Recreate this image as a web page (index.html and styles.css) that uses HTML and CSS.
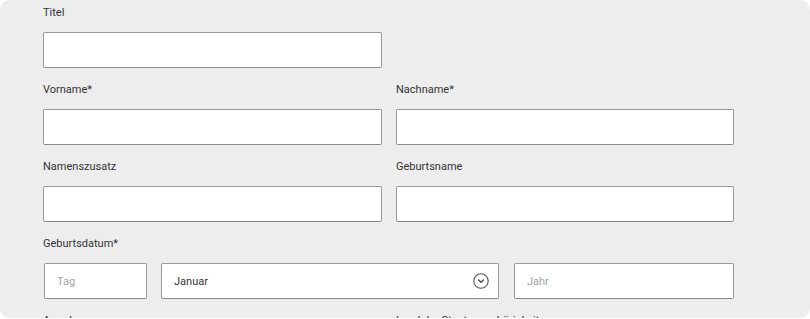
FILE: index.html
```html
<!DOCTYPE html>
<html lang="de">
<head>
    <meta charset="UTF-8">
    <meta name="viewport" content="width=device-width, initial-scale=1.0">
    <title>Persönliche Daten</title>
    <link rel="stylesheet" href="styles.css">
</head>
<body>
    <main class="panel">
        <form class="person-form">
            <div class="form-row">
                <div class="form-group">
                    <label for="titel">Titel</label>
                    <input type="text" id="titel" name="titel">
                </div>
            </div>
            <div class="form-row">
                <div class="form-group">
                    <label for="vorname">Vorname*</label>
                    <input type="text" id="vorname" name="vorname">
                </div>
                <div class="form-group">
                    <label for="nachname">Nachname*</label>
                    <input type="text" id="nachname" name="nachname">
                </div>
            </div>
            <div class="form-row">
                <div class="form-group">
                    <label for="zusatz">Namenszusatz</label>
                    <input type="text" id="zusatz" name="zusatz">
                </div>
                <div class="form-group">
                    <label for="geburtsname">Geburtsname</label>
                    <input type="text" id="geburtsname" name="geburtsname">
                </div>
            </div>
            <div class="form-group">
                <label for="tag">Geburtsdatum*</label>
                <div class="date-row">
                    <input type="text" id="tag" name="tag" placeholder="Tag">
                    <div class="select-wrap">
                        <select id="monat" name="monat">
                            <option>Januar</option>
                            <option>Februar</option>
                            <option>März</option>
                            <option>April</option>
                            <option>Mai</option>
                            <option>Juni</option>
                            <option>Juli</option>
                            <option>August</option>
                            <option>September</option>
                            <option>Oktober</option>
                            <option>November</option>
                            <option>Dezember</option>
                        </select>
                        <svg class="select-icon" width="16" height="16" viewBox="0 0 16 16" aria-hidden="true">
                            <circle cx="8" cy="8" r="7.2" fill="none" stroke="#555" stroke-width="1.1"/>
                            <path d="M5.6 7 L8 9.3 L10.4 7" fill="none" stroke="#444" stroke-width="1.3" stroke-linecap="round" stroke-linejoin="round"/>
                        </svg>
                    </div>
                    <input type="text" id="jahr" name="jahr" placeholder="Jahr">
                </div>
            </div>
            <div class="form-row">
                <div class="form-group">
                    <label for="anrede">Anrede</label>
                </div>
                <div class="form-group">
                    <label for="land">Land der Staatsangehörigkeit</label>
                </div>
            </div>
        </form>
    </main>
</body>
</html>
```

FILE: styles.css
```css
body {
    font-family: Roboto, "Liberation Sans", Arial, sans-serif;
    margin: 0;
    padding: 0;
    background-color: #ffffff;
    color: #333333;
}
.panel {
    height: 318px;
    background-color: #ededed;
    border-radius: 10px;
    padding: 3px 0 0 43px;
    box-sizing: border-box;
}
.form-row {
    display: grid;
    grid-template-columns: 339px 338px;
    column-gap: 14px;
}
.form-group {
    margin-bottom: 12px;
}
label {
    display: block;
    font-size: 11px;
    line-height: 20px;
    margin-bottom: 9px;
    color: #333333;
}
input,
select {
    display: block;
    width: 100%;
    height: 36px;
    box-sizing: border-box;
    padding: 0 12px;
    font-family: inherit;
    font-size: 11px;
    color: #333333;
    background: #ffffff;
    border: 1px solid #9a9a9a;
    border-bottom-color: #8a8a8a;
    border-radius: 2px;
    outline: none;
}
input::placeholder {
    color: #a3a3a3;
}
select {
    appearance: none;
    -webkit-appearance: none;
}
.date-row {
    display: grid;
    grid-template-columns: 104px 338px 220px;
    column-gap: 14px;
}
.date-row > input:first-child {
    margin-left: 1px;
    width: 103px;
}
.date-row > input:last-child {
    margin-left: 1px;
    width: 220px;
}
.select-wrap {
    position: relative;
}
.select-icon {
    position: absolute;
    right: 10px;
    top: 10px;
    pointer-events: none;
}
```
